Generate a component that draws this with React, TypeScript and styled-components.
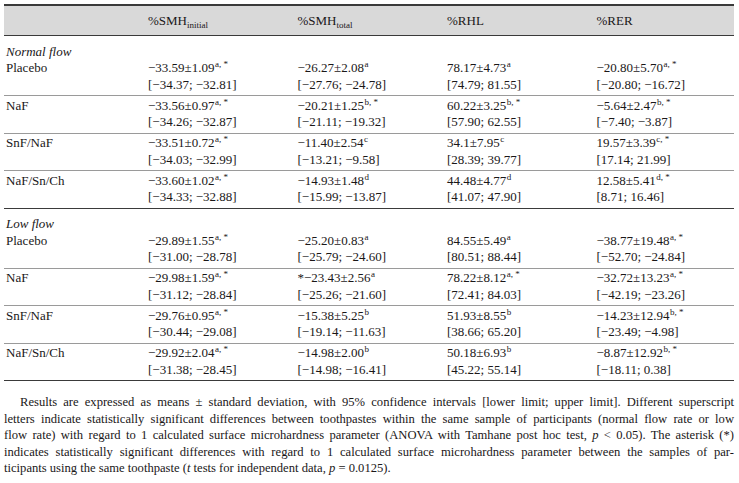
import React from "react";
import styled, {createGlobalStyle} from "styled-components";

const GlobalStyle = createGlobalStyle`
    body {
        margin: 0;
        background: #ffffff;
        color: #1a1718;
        font-family: "Liberation Serif", "Times New Roman", serif;
    }
`

type Value = { mean: string; sup: string; ci: string; pre?: string };
type Row = { name: string; values: Value[] };
type Group = { title: string; rows: Row[] };

const v = (mean: string, sup: string, ci: string, pre?: string): Value => ({mean, sup, ci, pre});

const groups: Group[] = [
    {
        title: "Normal flow",
        rows: [
            {name: "Placebo", values: [v("−33.59±1.09", "a, *", "[−34.37; −32.81]"), v("−26.27±2.08", "a", "[−27.76; −24.78]"), v("78.17±4.73", "a", "[74.79; 81.55]"), v("−20.80±5.70", "a, *", "[−20.80; −16.72]")]},
            {name: "NaF", values: [v("−33.56±0.97", "a, *", "[−34.26; −32.87]"), v("−20.21±1.25", "b, *", "[−21.11; −19.32]"), v("60.22±3.25", "b, *", "[57.90; 62.55]"), v("−5.64±2.47", "b, *", "[−7.40; −3.87]")]},
            {name: "SnF/NaF", values: [v("−33.51±0.72", "a, *", "[−34.03; −32.99]"), v("−11.40±2.54", "c", "[−13.21; −9.58]"), v("34.1±7.95", "c", "[28.39; 39.77]"), v("19.57±3.39", "c, *", "[17.14; 21.99]")]},
            {name: "NaF/Sn/Ch", values: [v("−33.60±1.02", "a, *", "[−34.33; −32.88]"), v("−14.93±1.48", "d", "[−15.99; −13.87]"), v("44.48±4.77", "d", "[41.07; 47.90]"), v("12.58±5.41", "d, *", "[8.71; 16.46]")]},
        ],
    },
    {
        title: "Low flow",
        rows: [
            {name: "Placebo", values: [v("−29.89±1.55", "a, *", "[−31.00; −28.78]"), v("−25.20±0.83", "a", "[−25.79; −24.60]"), v("84.55±5.49", "a", "[80.51; 88.44]"), v("−38.77±19.48", "a, *", "[−52.70; −24.84]")]},
            {name: "NaF", values: [v("−29.98±1.59", "a, *", "[−31.12; −28.84]"), v("−23.43±2.56", "a", "[−25.26; −21.60]", "*"), v("78.22±8.12", "a, *", "[72.41; 84.03]"), v("−32.72±13.23", "a, *", "[−42.19; −23.26]")]},
            {name: "SnF/NaF", values: [v("−29.76±0.95", "a, *", "[−30.44; −29.08]"), v("−15.38±5.25", "b", "[−19.14; −11.63]"), v("51.93±8.55", "b", "[38.66; 65.20]"), v("−14.23±12.94", "b, *", "[−23.49; −4.98]")]},
            {name: "NaF/Sn/Ch", values: [v("−29.92±2.04", "a, *", "[−31.38; −28.45]"), v("−14.98±2.00", "b", "[−14.98; −16.41]"), v("50.18±6.93", "b", "[45.22; 55.14]"), v("−8.87±12.92", "b, *", "[−18.11; 0.38]")]},
        ],
    },
];

const notes = [
    "Results are expressed as means ± standard deviation, with 95% confidence intervals [lower limit; upper limit]. Different superscript",
    "letters indicate statistically significant differences between toothpastes within the same sample of participants (normal flow rate or low",
];

export default function App() {
    return (
        <Page>
            <GlobalStyle/>
            <Table>
                <HeaderRow>
                    <Cell/>
                    <Cell>%SMH<Sub>initial</Sub></Cell>
                    <Cell>%SMH<Sub>total</Sub></Cell>
                    <Cell>%RHL</Cell>
                    <Cell>%RER</Cell>
                </HeaderRow>
                {groups.map((g) => (
                    <GroupBlock key={g.title}>
                        {g.rows.map((r, i) => (
                            <BodyRow key={r.name} $last={i === g.rows.length - 1}>
                                <NameCell>
                                    {i === 0 && <GroupTitle>{g.title}</GroupTitle>}
                                    {r.name}
                                </NameCell>
                                {r.values.map((val, j) => (
                                    <ValueCell key={j} $lead={i === 0}>
                                        <span>{val.pre}{val.mean}<Sup>{val.sup}</Sup></span>
                                        <span>{val.ci}</span>
                                    </ValueCell>
                                ))}
                            </BodyRow>
                        ))}
                    </GroupBlock>
                ))}
                <Footnote>
                    {notes.map((n) => <NoteLine key={n}>{n}</NoteLine>)}
                    <NoteLine>flow rate) with regard to 1 calculated surface microhardness parameter (ANOVA with Tamhane post hoc test, <i>p</i> &lt; 0.05). The asterisk (*)</NoteLine>
                    <NoteLine>indicates statistically significant differences with regard to 1 calculated surface microhardness parameter between the samples of par-</NoteLine>
                    <LastLine>ticipants using the same toothpaste (<i>t</i> tests for independent data, <i>p</i> = 0.0125).</LastLine>
                </Footnote>
            </Table>
        </Page>
    );
}

const Page = styled.div`
    padding: 4px 5px 0 4px;
    font-size: 13px;
    line-height: 16.5px;
`

const Table = styled.div`
    width: 730px;
    border-top: 2px solid #3a3a3a;
`

const rowGrid = `
    display: grid;
    grid-template-columns: 139px 149.5px 149.5px 149.5px 1fr;
`

const HeaderRow = styled.div`
    ${rowGrid};
    align-items: center;
    height: 28px;
    padding-top: 1px;
    background: #d9d9d9;
    border-bottom: 1px solid #3a3a3a;
`

const Cell = styled.div`
    padding-left: 5px;
    white-space: nowrap;
`

const Sub = styled.sub`
    font-size: 9px;
    vertical-align: -3px;
    line-height: 0;
`

const Sup = styled.sup`
    font-size: 9px;
    vertical-align: 5px;
    line-height: 0;
    margin-left: 0.5px;
`

const GroupBlock = styled.div``

const BodyRow = styled.div<{ $last: boolean }>`
    ${rowGrid};
    padding: 1.5px 0 2px;
    border-bottom: ${p => p.$last ? "1.5px solid #3a3a3a" : "1px solid #9a9a9a"};
`

const NameCell = styled.div`
    display: flex;
    flex-direction: column;
    padding-left: 2px;
    white-space: nowrap;
`

const GroupTitle = styled.span`
    font-style: italic;
    padding-top: 6px;
`

const ValueCell = styled.div<{ $lead: boolean }>`
    display: flex;
    flex-direction: column;
    padding-left: 5px;
    padding-top: ${p => p.$lead ? "22.5px" : "0"};
    white-space: nowrap;
`

const Footnote = styled.div`
    padding: 13px 0 8px;
    border-bottom: 1.5px solid #3a3a3a;
    font-size: 12.6px;
    line-height: 16.5px;
    & > div:first-child {
        text-indent: 16px;
    }
`

const NoteLine = styled.div`
    text-align: justify;
    text-align-last: justify;
    white-space: nowrap;
`

const LastLine = styled.div`
    white-space: nowrap;
`
